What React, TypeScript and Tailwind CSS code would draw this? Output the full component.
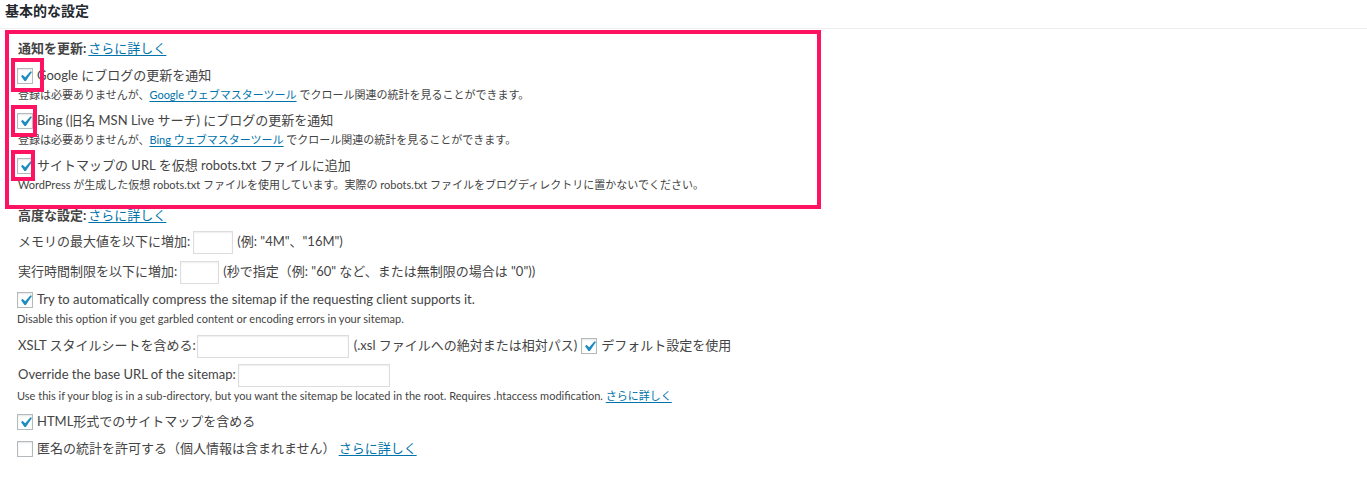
import React from "react";

const Cb = ({ checked = true }: { checked?: boolean }) => (
  <span className="relative inline-block w-4 h-4 border border-[#b4b9be] bg-white shadow-[inset_0_1px_2px_rgba(0,0,0,0.1)] shrink-0 mr-[4px]">
    {checked && (
      <svg className="absolute left-[-3px] top-[-3px] w-[21px] h-[21px]" viewBox="0 0 20 20">
        <path d="M14.83 4.89l1.34.94-5.81 8.38H9.02L5.78 9.67l1.34-1.25 2.57 2.4z" fill="#1e8cbe" />
      </svg>
    )}
  </span>
);

const Link = ({ children }: { children: React.ReactNode }) => (
  <a href="#" className="text-[#0073aa] underline underline-offset-2">
    {children}
  </a>
);

const Input = ({ w }: { w: string }) => (
  <span className={`inline-block h-[23px] ${w} border border-[#ddd] bg-white shadow-[inset_0_1px_2px_rgba(0,0,0,0.07)]`} />
);

export default function App() {
  return (
    <div className="relative w-[1367px] h-[489px] bg-white text-[#444] font-['Lato','Noto_Sans_CJK_JP',sans-serif] text-[13px] overflow-hidden">
      <div className="h-[29px] border-b border-[#eeeeee] px-[5px] text-[14px] font-bold text-[#23282d] leading-[22px]">
        基本的な設定
      </div>

      <div className="mt-[1px] ml-[5px] w-[816px] h-[179px] border-[4px] border-[#fe1262] pt-[4px]">
        <div className="h-[22px] flex items-center pl-[9px]">
          <span className="font-bold mr-[2px]">通知を更新:</span>
          <Link>さらに詳しく</Link>
        </div>
        <div className="mt-[5px] h-[22px] flex items-center pl-[8px]">
          <Cb />
          <span>Google にブログの更新を通知</span>
        </div>
        <div className="h-[16px] flex items-center pl-[9px] text-[11px]">
          <span>
            登録は必要ありませんが、<Link>Google ウェブマスターツール</Link> でクロール関連の統計を見ることができます。
          </span>
        </div>
        <div className="mt-[7px] h-[22px] flex items-center pl-[8px]">
          <Cb />
          <span>Bing (旧名 MSN Live サーチ) にブログの更新を通知</span>
        </div>
        <div className="h-[16px] flex items-center pl-[9px] text-[11px]">
          <span>
            登録は必要ありませんが、<Link>Bing ウェブマスターツール</Link> でクロール関連の統計を見ることができます。
          </span>
        </div>
        <div className="mt-[7px] h-[22px] flex items-center pl-[8px]">
          <Cb />
          <span>サイトマップの URL を仮想 robots.txt ファイルに追加</span>
        </div>
        <div className="h-[16px] flex items-center pl-[9px] text-[11px]">
          <span>
            WordPress が生成した仮想 robots.txt ファイルを使用しています。実際の robots.txt ファイルをブログディレクトリに置かないでください。
          </span>
        </div>
      </div>

      <div className="h-[14px] flex items-center pl-[18px]">
        <span className="font-bold mr-[2px]">高度な設定:</span>
        <Link>さらに詳しく</Link>
      </div>
      <div className="mt-[7px] h-[24px] flex items-center pl-[18px]">
        <span className="mr-[3px]">メモリの最大値を以下に増加:</span>
        <Input w="w-[40px]" />
        <span className="ml-[4px]">(例: "4M"、"16M")</span>
      </div>
      <div className="mt-[6px] h-[24px] flex items-center pl-[18px]">
        <span className="mr-[3px]">実行時間制限を以下に増加:</span>
        <Input w="w-[39px]" />
        <span className="ml-[4px]">(秒で指定（例: "60" など、または無制限の場合は "0"))</span>
      </div>
      <div className="mt-[5px] h-[22px] flex items-center pl-[17px]">
        <Cb />
        <span>Try to automatically compress the sitemap if the requesting client supports it.</span>
      </div>
      <div className="h-[16px] flex items-center pl-[17px] text-[11px]">
        Disable this option if you get garbled content or encoding errors in your sitemap.
      </div>
      <div className="mt-[7px] h-[24px] flex items-center pl-[18px]">
        <span className="mr-[1px]">XSLT スタイルシートを含める:</span>
        <Input w="w-[152px]" />
        <span className="ml-[5px] mr-[4px]">(.xsl ファイルへの絶対または相対パス)</span>
        <Cb />
        <span>デフォルト設定を使用</span>
      </div>
      <div className="mt-[5px] h-[24px] flex items-center pl-[18px]">
        <span className="mr-[2px]">Override the base URL of the sitemap:</span>
        <Input w="w-[152px]" />
      </div>
      <div className="mt-[1px] h-[16px] flex items-center pl-[17px] text-[11px]">
        <span>
          Use this if your blog is in a sub-directory, but you want the sitemap be located in the root. Requires .htaccess modification.{" "}
          <Link>さらに詳しく</Link>
        </span>
      </div>
      <div className="mt-[7px] h-[22px] flex items-center pl-[17px]">
        <Cb />
        <span>HTML形式でのサイトマップを含める</span>
      </div>
      <div className="mt-[5px] h-[22px] flex items-center pl-[17px]">
        <Cb checked={false} />
        <span className="mr-[3px]">匿名の統計を許可する（個人情報は含まれません）</span>
        <Link>さらに詳しく</Link>
      </div>

      <div className="absolute left-[11px] top-[58px] w-[33px] h-[34px] border-[4px] border-[#fe1262]" />
      <div className="absolute left-[11px] top-[105px] w-[26px] h-[32px] border-[4px] border-[#fe1262]" />
      <div className="absolute left-[11px] top-[150px] w-[24px] h-[31px] border-[4px] border-[#fe1262]" />
    </div>
  );
}
